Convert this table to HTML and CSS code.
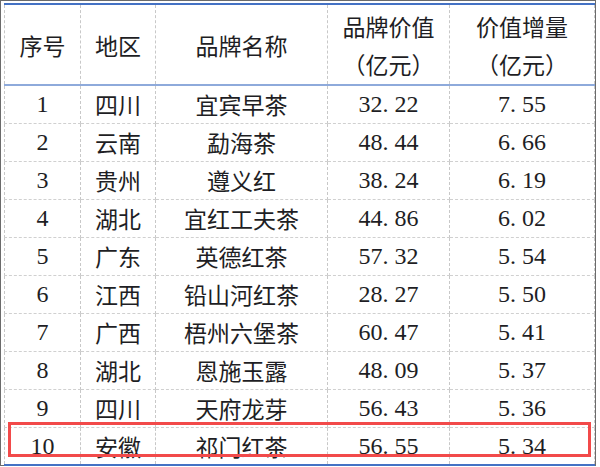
FILE: index.html
```html
<!DOCTYPE html>
<html lang="zh">
<head>
<meta charset="utf-8">
<link rel="stylesheet" href="styles.css">
</head>
<body>
<div class="frame">
  <table class="brands">
    <colgroup>
      <col class="c1"><col class="c2"><col class="c3"><col class="c4"><col class="c5">
    </colgroup>
    <thead>
      <tr>
        <th>序号</th>
        <th>地区</th>
        <th>品牌名称</th>
        <th>品牌价值<br>（亿元）</th>
        <th>价值增量<br>（亿元）</th>
      </tr>
    </thead>
    <tbody>
      <tr><td class="num">1</td><td>四川</td><td>宜宾早茶</td><td class="num">32<span class="dot">.</span>22</td><td class="num">7<span class="dot">.</span>55</td></tr>
      <tr><td class="num">2</td><td>云南</td><td>勐海茶</td><td class="num">48<span class="dot">.</span>44</td><td class="num">6<span class="dot">.</span>66</td></tr>
      <tr><td class="num">3</td><td>贵州</td><td>遵义红</td><td class="num">38<span class="dot">.</span>24</td><td class="num">6<span class="dot">.</span>19</td></tr>
      <tr><td class="num">4</td><td>湖北</td><td>宜红工夫茶</td><td class="num">44<span class="dot">.</span>86</td><td class="num">6<span class="dot">.</span>02</td></tr>
      <tr><td class="num">5</td><td>广东</td><td>英德红茶</td><td class="num">57<span class="dot">.</span>32</td><td class="num">5<span class="dot">.</span>54</td></tr>
      <tr><td class="num">6</td><td>江西</td><td>铅山河红茶</td><td class="num">28<span class="dot">.</span>27</td><td class="num">5<span class="dot">.</span>50</td></tr>
      <tr><td class="num">7</td><td>广西</td><td>梧州六堡茶</td><td class="num">60<span class="dot">.</span>47</td><td class="num">5<span class="dot">.</span>41</td></tr>
      <tr><td class="num">8</td><td>湖北</td><td>恩施玉露</td><td class="num">48<span class="dot">.</span>09</td><td class="num">5<span class="dot">.</span>37</td></tr>
      <tr><td class="num">9</td><td>四川</td><td>天府龙芽</td><td class="num">56<span class="dot">.</span>43</td><td class="num">5<span class="dot">.</span>36</td></tr>
      <tr><td class="num">10</td><td>安徽</td><td>祁门红茶</td><td class="num">56<span class="dot">.</span>55</td><td class="num">5<span class="dot">.</span>34</td></tr>
    </tbody>
  </table>
  <div class="highlight"></div>
</div>
</body>
</html>
```
FILE: styles.css
```css
html, body {
  margin: 0;
  padding: 0;
  background: #ffffff;
}

.frame {
  position: relative;
  box-sizing: border-box;
  width: 596px;
  height: 466px;
  border: 1px solid #6b6b6b;
  padding: 2px 0 0 3px;
  background: #ffffff;
}

.brands {
  border-collapse: collapse;
  table-layout: fixed;
  width: 590px;
  font-family: "Noto Sans CJK SC", sans-serif;
  font-size: 23px;
  color: #1e1e24;
  border-top: 2px solid #4472c4;
  border-bottom: 2px solid #4472c4;
}

.c1 { width: 76px; }
.c2 { width: 75px; }
.c3 { width: 172px; }
.c4 { width: 122px; }
.c5 { width: 145px; }

.brands th,
.brands td {
  padding: 0;
  text-align: center;
  vertical-align: middle;
  border-left: 1px dashed #c8c8c8;
  border-right: 1px dashed #c8c8c8;
  border-top: 1px dashed #d0d0d0;
  border-bottom: 1px dashed #d0d0d0;
  white-space: nowrap;
}

.brands th {
  font-weight: 400;
  line-height: 38px;
  height: 79px;
  border-bottom: 2px solid #8eaadb;
}

.brands tbody tr {
  height: 38px;
}

.brands td {
  line-height: 30px;
}

.num {
  font-family: "Liberation Serif", "Noto Sans CJK SC", serif;
  font-size: 24px;
}

.dot {
  margin-right: 6px;
}

.highlight {
  position: absolute;
  left: 7px;
  top: 421px;
  width: 577px;
  height: 29px;
  border: 3px solid #f24a4a;
}
```
